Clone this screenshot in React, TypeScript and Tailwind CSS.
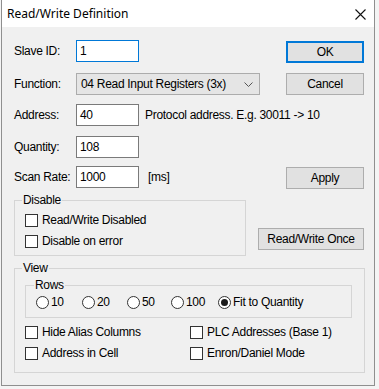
import React from 'react';

const font = "font-['Liberation_Sans',Arial,sans-serif] text-[12px] tracking-[-0.3px] text-black";

const Checkbox = ({ label }: { label: string }) => (
  <label className="flex items-center h-[13px]">
    <span className="w-[13px] h-[13px] border border-[#333333] bg-white shrink-0" />
    <span className="ml-[4px] leading-[13px] whitespace-nowrap">{label}</span>
  </label>
);

const Radio = ({ label, checked, w }: { label: string; checked?: boolean; w: string }) => (
  <label className={`flex items-center h-[13px] ${w}`}>
    <span className="w-[13px] h-[13px] rounded-full border border-[#333333] bg-white shrink-0 flex items-center justify-center">
      {checked && <span className="w-[7px] h-[7px] rounded-full bg-[#1a1a1a]" />}
    </span>
    <span className="ml-[2px] leading-[13px] whitespace-nowrap">{label}</span>
  </label>
);

const Button = ({ children, primary, className = '' }: { children: React.ReactNode; primary?: boolean; className?: string }) => (
  <button
    className={`h-[22px] bg-[#e1e1e1] flex items-center justify-center ${
      primary ? 'border-2 border-[#0078d7]' : 'border border-[#adadad]'
    } ${className}`}
  >
    {children}
  </button>
);

const TextInput = ({ value, focused }: { value: string; focused?: boolean }) => (
  <div
    className={`w-[63px] h-[22px] bg-white border pl-[3px] flex items-center ${
      focused ? 'border-[#0078d7]' : 'border-[#7a7a7a]'
    }`}
  >
    {value}
  </div>
);

export default function App() {
  return (
    <div className={`w-[379px] h-[389px] bg-[#f4f4f4] ${font}`}>
      <div className="ml-[1px] w-[374px] h-[386px] border-x border-b border-[#8f8f8f] flex flex-col">
        {/* title bar */}
        <div className="h-[27px] bg-white flex items-center justify-between pl-[5px] pr-[8px] shrink-0">
          <span className="font-['Noto_Sans',sans-serif] text-[12px] tracking-normal">Read/Write Definition</span>
          <svg width="11" height="11" viewBox="0 0 11 11" className="mt-[1px]">
            <path d="M0.5 0.5 L10.5 10.5 M10.5 0.5 L0.5 10.5" stroke="#111" strokeWidth="1.1" />
          </svg>
        </div>

        {/* body */}
        <div className="flex-1 bg-[#f0f0f0] pl-[12px] pr-[10px] pt-[13px] flex flex-col">
          <div className="flex items-start justify-between">
            <div className="flex items-center">
              <span className="w-[62px]">Slave ID:</span>
              <TextInput value="1" focused />
            </div>
            <Button primary className="w-[78px] mt-[1px]">OK</Button>
          </div>

          <div className="flex items-start justify-between mt-[10px]">
            <div className="flex items-center">
              <span className="w-[62px]">Function:</span>
              <div className="w-[184px] h-[22px] bg-[#e5e5e5] border border-[#acacac] pl-[4px] pr-[6px] flex items-center justify-between">
                <span>04 Read Input Registers (3x)</span>
                <svg width="9" height="5" viewBox="0 0 9 5">
                  <path d="M0.5 0.5 L4.5 4.5 L8.5 0.5" stroke="#555" fill="none" strokeWidth="1" />
                </svg>
              </div>
            </div>
            <Button className="w-[78px]">Cancel</Button>
          </div>

          <div className="flex items-center mt-[9px]">
            <span className="w-[62px]">Address:</span>
            <TextInput value="40" />
            <span className="ml-[6px]">Protocol address. E.g. 30011 -&gt; 10</span>
          </div>

          <div className="flex items-center mt-[10px]">
            <span className="w-[62px]">Quantity:</span>
            <TextInput value="108" />
          </div>

          <div className="flex items-start justify-between mt-[8px]">
            <div className="flex items-center">
              <span className="w-[62px]">Scan Rate:</span>
              <TextInput value="1000" />
              <span className="ml-[9px]">[ms]</span>
            </div>
            <Button className="w-[78px] mt-[1px]">Apply</Button>
          </div>

          <div className="flex items-start justify-between mt-[4px]">
            <fieldset className="w-[232px] h-[63px] border border-[#d5d5d5] px-0">
              <legend className="ml-[7px] px-[1px] leading-[14px]">Disable</legend>
              <div className="flex flex-col gap-[8px] pl-[10px] pt-[7px]">
                <Checkbox label="Read/Write Disabled" />
                <Checkbox label="Disable on error" />
              </div>
            </fieldset>
            <Button className="w-[106px] mt-[35px]">Read/Write Once</Button>
          </div>

          <fieldset className="w-[351px] h-[112px] border border-[#d5d5d5] px-0 mt-[5px]">
            <legend className="ml-[7px] px-[1px] leading-[14px]">View</legend>
            <fieldset className="ml-[10px] w-[327px] h-[40px] border border-[#d5d5d5] px-0 mt-[3px]">
              <legend className="ml-[8px] px-[1px] leading-[14px]">Rows</legend>
              <div className="flex items-center pl-[10px] pt-[4px]">
                <Radio label="10" w="w-[46px]" />
                <Radio label="20" w="w-[45px]" />
                <Radio label="50" w="w-[44px]" />
                <Radio label="100" w="w-[47px]" />
                <Radio label="Fit to Quantity" w="w-auto" checked />
              </div>
            </fieldset>
            <div className="grid grid-cols-[165px_1fr] gap-y-[8px] pl-[10px] mt-[8px]">
              <Checkbox label="Hide Alias Columns" />
              <Checkbox label="PLC Addresses (Base 1)" />
              <Checkbox label="Address in Cell" />
              <Checkbox label="Enron/Daniel Mode" />
            </div>
          </fieldset>
        </div>
      </div>
    </div>
  );
}
